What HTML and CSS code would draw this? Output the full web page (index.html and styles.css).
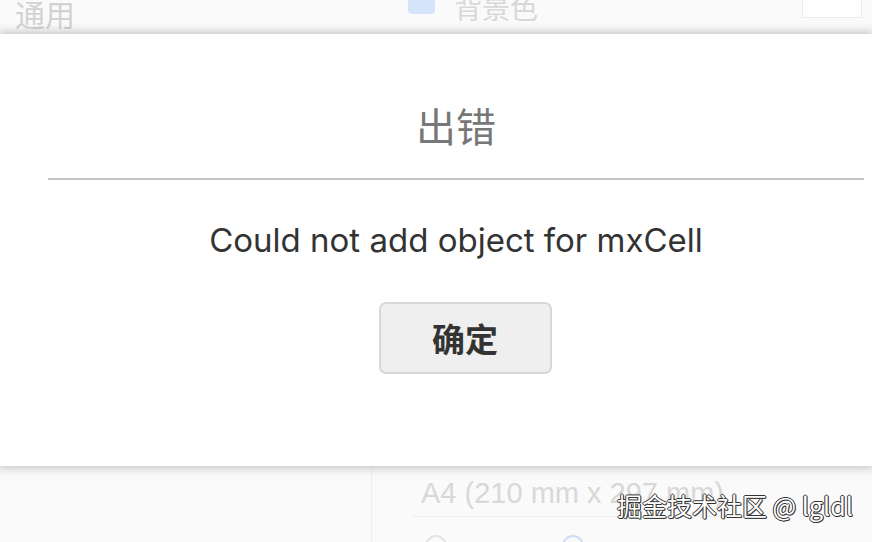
FILE: index.html
```html
<!DOCTYPE html>
<html>
<head>
<meta charset="utf-8">
<link rel="stylesheet" href="styles.css">
</head>
<body>
<div class="backdrop">
  <div class="bg-top">
    <span class="bg-tab">通用</span>
    <span class="bg-check"></span>
    <span class="bg-label">背景色</span>
    <span class="bg-swatch"></span>
  </div>
  <div class="bg-bottom">
    <div class="bg-left"></div>
    <div class="bg-right">
      <div class="bg-select">A4 (210 mm x 297 mm)</div>
      <div class="bg-radios"><span class="radio"></span><span class="radio blue"></span></div>
    </div>
  </div>
</div>
<div class="dialog">
  <h1 class="title">出错</h1>
  <div class="rule"></div>
  <p class="message">Could not add object for mxCell</p>
  <button class="ok">确定</button>
</div>
<div class="watermark">掘金技术社区 @ lgldl</div>
</body>
</html>
```
FILE: styles.css
```css
* { box-sizing: border-box; }
html, body { margin: 0; padding: 0; }
body {
  width: 872px; height: 542px; overflow: hidden;
  background: #fafafa;
  font-family: "Noto Sans CJK SC", "Noto Sans", sans-serif;
  position: relative;
}
.backdrop { display: flex; flex-direction: column; height: 542px; overflow: hidden; }
.bg-top {
  height: 34px; flex: none; display: flex; align-items: flex-start; position: relative;
}
.bg-tab {
  margin-left: 15px; margin-top: -7px; font-size: 30px; color: #d2d2d2; line-height: 40px;
}
.bg-check {
  margin-left: 333px; margin-top: -4px; width: 27px; height: 18px; background: #d6e4fb; border-radius: 4px;
}
.bg-label {
  margin-left: 19px; margin-top: -13px; font-size: 28px; line-height: 40px; color: #d8d8d8;
}
.bg-swatch {
  margin-left: auto; margin-right: 10px; width: 60px; height: 18px; border: 1px solid #ececec; border-top: 0; background: #fff;
}
.bg-bottom { flex: 1; display: flex; margin-top: 432px; min-height: 0; }
.bg-left { width: 372px; border-right: 1px solid #f0f0f0; }
.bg-right { flex: 1; padding-left: 40px; padding-top: 7px; }
.bg-select {
  width: 330px; padding-left: 9px; font-family: "Liberation Sans", sans-serif; font-size: 29px; line-height: 40px; color: #d8d8d8;
  white-space: nowrap;
  border-bottom: 1px solid #f0f0f0; padding-bottom: 3px;
}
.bg-radios { display: flex; gap: 115px; padding-left: 13px; margin-top: 18px; }
.radio { width: 22px; height: 22px; border-radius: 50%; border: 2px solid #e4e4e4; }
.radio.blue { border-color: #cfdcf5; }

.dialog {
  position: absolute; left: 0; top: 34px; width: 872px; height: 432px;
  background: #fff;
  box-shadow: 0 0 9px 2px rgba(0,0,0,0.22);
  display: flex; flex-direction: column; align-items: center;
  padding-left: 40px;
}
.title {
  margin: 65px 0 0 0; font-size: 40px; font-weight: 400; color: #777; line-height: 52px; height: 52px;
}
.rule {
  margin-top: 27px; width: 816px; height: 2px; background: #c3c3c3; align-self: flex-start; margin-left: 8px;
}
.message {
  margin: 38px 0 0 0; font-family: "Inter", "Open Sans", sans-serif; font-size: 33px; color: #333; line-height: 44px;
}
.ok {
  margin-top: 40px; margin-left: 18px; width: 173px; height: 72px;
  background: #efefef; border: 2px solid #d8d8d8; border-radius: 7px;
  font-family: "Noto Sans CJK SC", sans-serif; font-weight: 700; font-size: 33px; color: #333;
}
.watermark {
  position: absolute; left: 617px; top: 487px;
  font-family: "Noto Sans CJK SC", "Liberation Sans", sans-serif; font-size: 25px; line-height: 36px;
  color: #fff;
  text-shadow: -1px 0 #333, 1px 0 #333, 0 -1px #333, 0 1px #333, 1px 1px #555;
}
```
